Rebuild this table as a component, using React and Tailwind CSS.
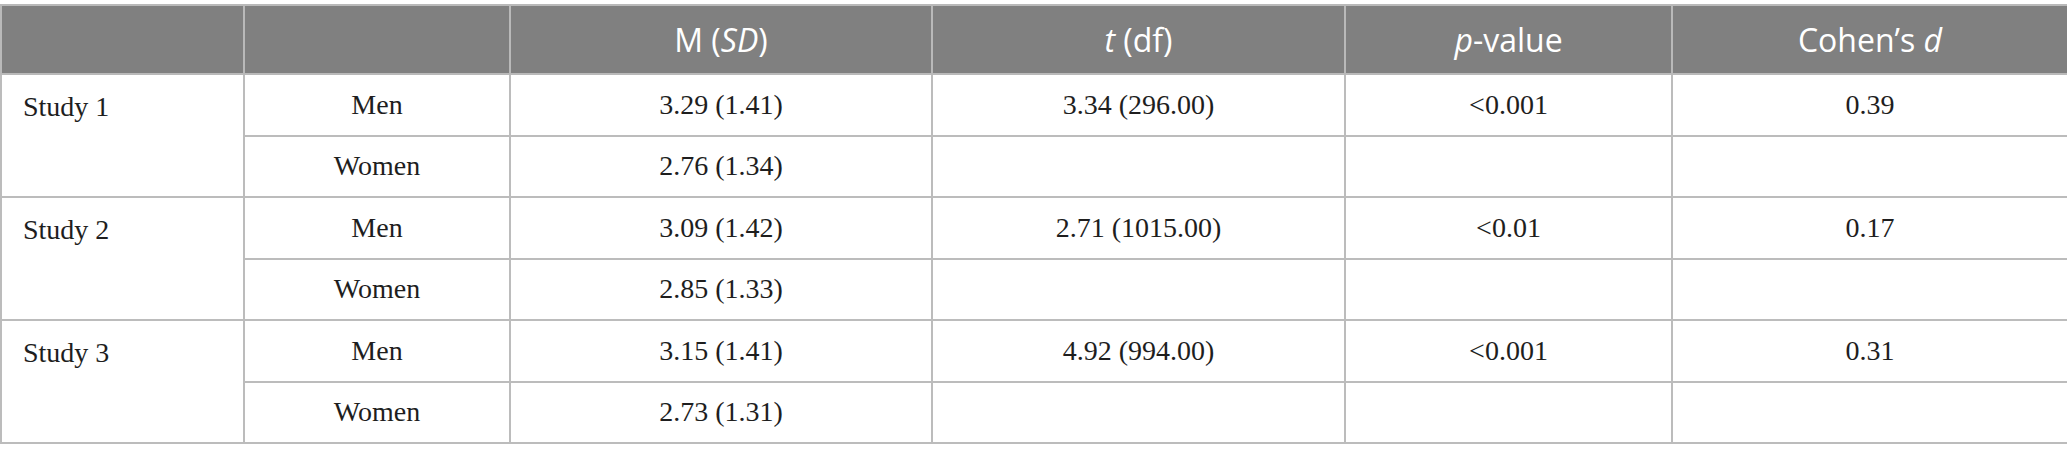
import React from 'react';

const studies = [
  { name: 'Study 1', men: '3.29 (1.41)', women: '2.76 (1.34)', t: '3.34 (296.00)', p: '<0.001', d: '0.39' },
  { name: 'Study 2', men: '3.09 (1.42)', women: '2.85 (1.33)', t: '2.71 (1015.00)', p: '<0.01', d: '0.17' },
  { name: 'Study 3', men: '3.15 (1.41)', women: '2.73 (1.31)', t: '4.92 (994.00)', p: '<0.001', d: '0.31' },
];

const th = 'border-2 border-[#b9b9b9] font-normal text-center align-middle';
const td = 'border-2 border-[#bcbcbc] text-center align-middle';

const App = () => {
  return (
    <div className="bg-white w-[2067px] h-[460px] pt-[4px]">
      <table
        className="table-fixed border-collapse w-[2067px] text-[#1e1e1e] text-[28px] leading-none"
        style={{ fontFamily: '"Liberation Serif", serif' }}
      >
        <colgroup>
          <col className="w-[243px]" />
          <col className="w-[266px]" />
          <col className="w-[422px]" />
          <col className="w-[413px]" />
          <col className="w-[327px]" />
          <col className="w-[396px]" />
        </colgroup>

        {/* Header */}
        <thead>
          <tr
            className="h-[69px] bg-[#808080] text-white text-[32px]"
            style={{ fontFamily: '"Open Sans", "Noto Sans", sans-serif' }}
          >
            <th className={th}></th>
            <th className={th}></th>
            <th className={th}>M (<i>SD</i>)</th>
            <th className={th}><i>t</i> (df)</th>
            <th className={th}><i>p</i>-value</th>
            <th className={th}>Cohen’s <i>d</i></th>
          </tr>
        </thead>

        {/* Body */}
        <tbody>
          {studies.map((s) => (
            <React.Fragment key={s.name}>
              <tr className="h-[61.5px]">
                <td rowSpan={2} className="border-2 border-[#bcbcbc] align-top text-left pl-[21px] pt-[18px]">
                  {s.name}
                </td>
                <td className={td}>Men</td>
                <td className={td}>{s.men}</td>
                <td className={td}>{s.t}</td>
                <td className={td}>{s.p}</td>
                <td className={td}>{s.d}</td>
              </tr>
              <tr className="h-[61.5px]">
                <td className={td}>Women</td>
                <td className={td}>{s.women}</td>
                <td className={td}></td>
                <td className={td}></td>
                <td className={td}></td>
              </tr>
            </React.Fragment>
          ))}
        </tbody>
      </table>
    </div>
  );
};

export default App;
